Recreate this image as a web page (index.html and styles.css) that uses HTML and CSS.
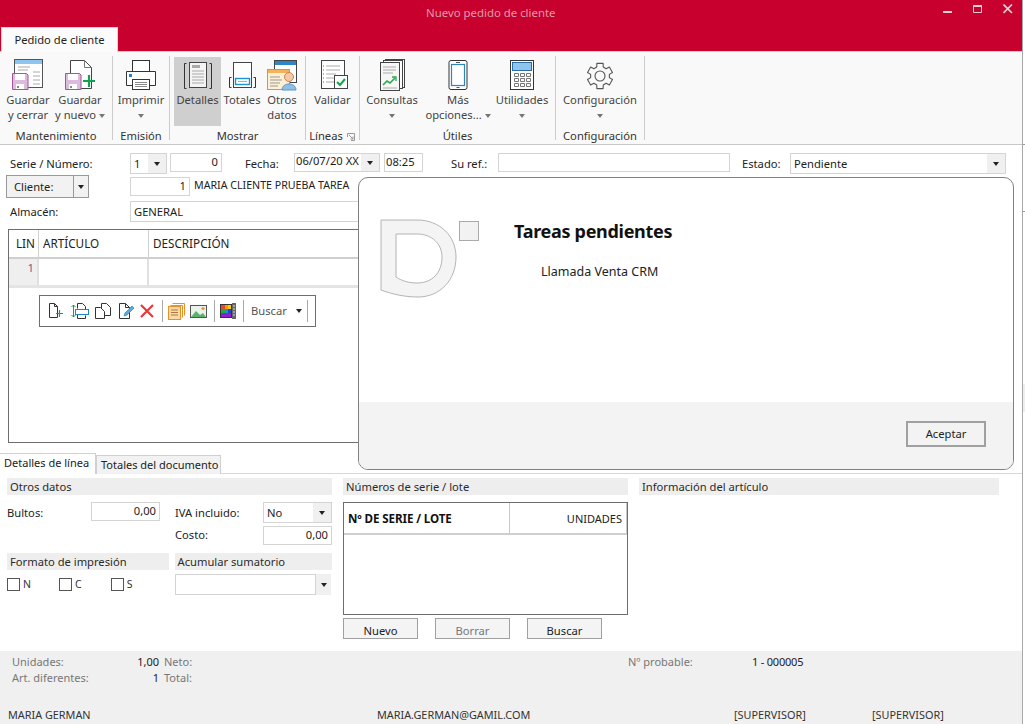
FILE: index.html
```html
<!DOCTYPE html>
<html lang="es">
<head>
<meta charset="utf-8">
<title>Nuevo pedido de cliente</title>
<link rel="stylesheet" href="styles.css">
</head>
<body>
<div class="screen">
<div class="app">
  <header class="titlebar">
    <div class="title-row">
      <span class="title">Nuevo pedido de cliente</span>
      <div class="win-controls">
        <svg width="10" height="10" viewBox="0 0 10 10"><rect x="0" y="7" width="9" height="2" fill="#e8d0d6"/></svg>
        <svg width="10" height="10" viewBox="0 0 10 10"><path d="M.5 2.5h8v6h-8z" fill="none" stroke="#e8d0d6"/><rect y="1" width="9" height="2" fill="#e8d0d6"/></svg>
        <svg width="10" height="10" viewBox="0 0 10 10"><path d="M.5.5l8.500 8.500M9 .5L.5 9" fill="none" stroke="#e8d0d6" stroke-width="1.700"/></svg>
      </div>
    </div>
    <div class="tab-row"><div class="ribbon-tab">Pedido de cliente</div></div>
  </header>

  <nav class="ribbon">
    <section class="group g1">
      <div class="buttons">
        <div class="rbtn w50"><svg class="ri" width="34" height="34" viewBox="0 0 34 34">
          <rect x="3.500" y="1.500" width="28" height="28" fill="#fff" stroke="#555"/><rect x="4" y="2" width="27" height="4" fill="#8ec5ee"/>
          <path d="M7 9h12M7 12h10M22 14h7M22 18h7M22 22h7M22 26h7M7 9v0" stroke="#aaa" fill="none"/>
          <path d="M1.500 15.500h14l1.500 1.500v14.500h-15.500z" fill="#dcbcdc" stroke="#a5559d"/><rect x="4" y="16" width="10" height="6" fill="#fff"/><rect x="5" y="26" width="8" height="5" fill="#fff"/><rect x="6" y="28" width="2" height="2" fill="#888"/>
        </svg><span>Guardar<br>y cerrar</span></div>
        <div class="rbtn w54"><svg class="ri" width="34" height="34" viewBox="0 0 34 34">
          <path d="M7.500 2.500h14l7 7v21h-21z" fill="#fff" stroke="#444"/><path d="M21.500 2.500v7h7" fill="none" stroke="#777"/>
          <path d="M2.500 15.500h14l1.500 1.500v14.500h-15.500z" fill="#dcbcdc" stroke="#a5559d"/><rect x="5" y="16" width="10" height="6" fill="#fff"/><rect x="6" y="26" width="8" height="5" fill="#fff"/><rect x="7" y="28" width="2" height="2" fill="#888"/>
          <path d="M26 17v12M20 23h12" stroke="#12a150" stroke-width="2.200" fill="none"/>
        </svg><span>Guardar<br>y nuevo <i class="caret grey"></i></span></div>
      </div>
      <div class="group-label">Mantenimiento</div>
    </section>
    <section class="group g2">
      <div class="buttons">
        <div class="rbtn w56"><svg class="ri" width="34" height="34" viewBox="0 0 34 34">
          <rect x="8.500" y="2.500" width="17" height="11" fill="#fff" stroke="#333"/><path d="M2.500 13.500h29v14h-29z" fill="#fff" stroke="#333"/><rect x="5" y="16" width="3" height="3" fill="#1f80c8"/>
          <rect x="8.500" y="21.500" width="17" height="10" fill="#fff" stroke="#333"/><path d="M11 24.500h12M11 26.500h12M11 28.500h12" stroke="#888" fill="none"/>
        </svg><span>Imprimir<br><i class="caret grey"></i></span></div>
      </div>
      <div class="group-label">Emisión</div>
    </section>
    <section class="group g3">
      <div class="buttons">
        <div class="rbtn w47 active"><svg class="ri" width="34" height="34" viewBox="0 0 34 34">
          <path d="M5.500 5.500h-2v25h2M28.500 5.500h2v25h-2" fill="none" stroke="#333"/><rect x="8.500" y="3.500" width="17" height="25" fill="#f4f4f4" stroke="#444" transform="translate(0 1)"/>
          <rect x="11" y="7" width="8" height="3" fill="#aaa"/><path d="M11 13h12M11 16h12M11 19h12M11 22h12M11 25h12" stroke="#aaa" fill="none"/>
        </svg><span>Detalles</span></div>
        <div class="rbtn w42"><svg class="ri" width="34" height="34" viewBox="0 0 34 34">
          <rect x="8.500" y="3.500" width="18" height="25" fill="#fff" stroke="#444" transform="translate(0 1)"/><path d="M6.500 19.500h-2v10h2M28.500 19.500h2v10h-2" fill="none" stroke="#333"/>
          <rect x="10.500" y="20.500" width="14" height="6" fill="#fff" stroke="#1f93d0" stroke-width="1.400"/><path d="M13 23.500h9" stroke="#aaa"/>
        </svg><span>Totales</span></div>
        <div class="rbtn w38"><svg class="ri" width="34" height="34" viewBox="0 0 34 34">
          <rect x="9.500" y="2.500" width="22" height="22" fill="#fff" stroke="#444"/><rect x="10" y="3" width="21" height="4" fill="#2f86c5"/>
          <rect x="2.500" y="11.500" width="22" height="20" fill="#fdf0d4" stroke="#d9924a"/><rect x="3" y="12" width="21" height="3" fill="#f5b25a"/><path d="M5 19h10M5 22h12M5 25h10M5 28h8" stroke="#999"/>
          <circle cx="24" cy="19" r="4.500" fill="#f4c9a6" stroke="#c98552"/><path d="M17 32c0-8 14-8 14 0z" fill="#8fbfe4" stroke="#5a95c8"/>
        </svg><span>Otros<br>datos</span></div>
      </div>
      <div class="group-label">Mostrar</div>
    </section>
    <section class="group g4">
      <div class="buttons">
        <div class="rbtn w53"><svg class="ri" width="34" height="34" viewBox="0 0 34 34">
          <rect x="5.500" y="2.500" width="23" height="28" fill="#fff" stroke="#444"/><path d="M10 8h14M10 12h14M10 16h10M10 20h8M10 24h8" stroke="#aaa"/><path d="M7 8h1M7 12h1M7 16h1M7 20h1M7 24h1" stroke="#c33"/>
          <rect x="18.500" y="17.500" width="13" height="13" fill="#fff" stroke="#444"/><path d="M21 24l3 3 5-6" fill="none" stroke="#16a34a" stroke-width="2"/>
        </svg><span>Validar</span></div>
      </div>
      <div class="group-label with-launcher">Líneas<svg class="launcher" width="8" height="8" viewBox="0 0 8 8"><path d="M.5 4V.5H7.500V7.500H4M2 2l4 4M6 3.500V6H3.500" fill="none" stroke="#999"/></svg></div>
    </section>
    <section class="group g5">
      <div class="buttons">
        <div class="rbtn w64"><svg class="ri" width="34" height="34" viewBox="0 0 34 34">
          <rect x="10.500" y="1.500" width="19" height="28" fill="#fff" stroke="#444"/><rect x="8.500" y="2.500" width="19" height="28" fill="#fff" stroke="#444"/>
          <rect x="5.500" y="4.500" width="19" height="28" fill="#f6f6f6" stroke="#444"/><path d="M8 9h13M8 12h13M8 15h10" stroke="#aaa"/>
          <path d="M8 27l4-4 3 2 5-5" fill="none" stroke="#2da84f" stroke-width="1.600"/><path d="M17 19h4v4" fill="none" stroke="#2da84f" stroke-width="1.300"/><path d="M8 30h14" stroke="#aaa"/>
        </svg><span>Consultas<br><i class="caret grey"></i></span></div>
        <div class="rbtn w68"><svg class="ri" width="34" height="34" viewBox="0 0 34 34">
          <rect x="8" y="2.500" width="18" height="29" rx="2" fill="#fff" stroke="#333"/><rect x="10.500" y="6.500" width="13" height="21" fill="#fff" stroke="#2a86c4" stroke-width="1.200"/><path d="M15 4.500h4M15.500 29.500h3" stroke="#555"/>
        </svg><span>Más<br>opciones... <i class="caret grey"></i></span></div>
        <div class="rbtn w60"><svg class="ri" width="34" height="34" viewBox="0 0 34 34">
          <rect x="5.500" y="2.500" width="23" height="29" fill="#fff" stroke="#333"/><rect x="7.500" y="4.500" width="19" height="8" fill="#8ec5ee" stroke="#2a6ea5"/>
          <path d="M9.500 15.500h4v3h-4zM15.500 15.500h4v3h-4zM21.500 15.500h4v3h-4zM9.500 20.500h4v3h-4zM15.500 20.500h4v3h-4zM21.500 20.500h4v3h-4zM9.500 25.500h4v3h-4zM15.500 25.500h4v3h-4zM21.500 25.500h4v3h-4z" fill="#fff" stroke="#777"/>
        </svg><span>Utilidades<br><i class="caret grey"></i></span></div>
      </div>
      <div class="group-label">Útiles</div>
    </section>
    <section class="group g6">
      <div class="buttons">
        <div class="rbtn w88"><svg class="ri" width="34" height="34" viewBox="0 0 34 34">
          <g transform="translate(17 18)" fill="none" stroke="#555" stroke-width="1.100" stroke-linejoin="round">
            <path d="M-3.150-12.600L3.150-12.600 3.250-8.930 6.110-7.280 9.350-9.030 12.500-3.580 9.360-1.650 9.360 1.650 12.500 3.580 9.350 9.030 6.110 7.280 3.250 8.930 3.150 12.600-3.150 12.600-3.250 8.930-6.110 7.280-9.350 9.030-12.500 3.580-9.360 1.650-9.360-1.650-12.500-3.580-9.350-9.030-6.110-7.280-3.250-8.930Z"/>
            <circle r="5"/>
          </g>
        </svg><span>Configuración<br><i class="caret grey"></i></span></div>
      </div>
      <div class="group-label">Configuración</div>
    </section>
  </nav>

  <main class="content">
    <div class="form-top">
      <div class="row row1">
        <label class="lbl l-serie">Serie / Número:</label>
        <div class="field combo c-serie"><span class="val">1</span><b class="drop"><i class="caret"></i></b></div>
        <div class="field num c-num">0</div>
        <label class="lbl l-fecha">Fecha:</label>
        <div class="field combo c-date"><span class="val">06/07/20 XX</span><b class="drop"><i class="caret"></i></b></div>
        <div class="field c-time">08:25</div>
        <label class="lbl l-ref">Su ref.:</label>
        <div class="field c-ref"></div>
        <label class="lbl l-estado">Estado:</label>
        <div class="field combo c-estado"><span class="val">Pendiente</span><b class="drop"><i class="caret"></i></b></div>
      </div>
      <div class="row row2">
        <div class="cliente-btn"><span class="cliente-text">Cliente:</span><b class="cliente-drop"><i class="caret"></i></b></div>
        <div class="field num c-cli">1</div>
        <span class="cli-name">MARIA CLIENTE PRUEBA TAREA</span>
      </div>
      <div class="row row3">
        <label class="lbl l-serie">Almacén:</label>
        <div class="field c-alm">GENERAL</div>
      </div>
    </div>

    <div class="lines">
      <div class="lines-head"><div>LIN</div><div>ARTÍCULO</div><div>DESCRIPCIÓN</div></div>
      <div class="lines-row"><div class="lin-no">1</div><div></div><div></div></div>
      <div class="float-bar">
        <svg width="18" height="18" viewBox="0 0 18 18"><path d="M1.500 1.500h5l3 3v11h-8zM6.500 1.500v3h3" fill="#fff" stroke="#333"/><path d="M8 11.500h7M11.500 8v7" stroke="#12a150" stroke-width="1.200"/></svg>
        <svg width="18" height="18" viewBox="0 0 18 18"><path d="M6.500 1.500h5l3 3v3M6.500 1.500v5M6.500 11.500v5h8v-3" fill="#fff" stroke="#333"/><rect x="4.500" y="7.500" width="13" height="5" fill="#fff" stroke="#1f86c8"/><path d="M2.500 3v12M.5 5l2-2 2 2M.5 13l2 2 2-2" fill="none" stroke="#12a150"/></svg>
        <svg width="18" height="18" viewBox="0 0 18 18"><path d="M7.500 1.500h5l4 4v8h-9z" fill="#fff" stroke="#333"/><path d="M1.500 5.500h5l4 4v7h-9z" fill="#fff" stroke="#333"/></svg>
        <svg width="18" height="18" viewBox="0 0 18 18"><path d="M2.500 1.500h6l4 4v11h-10zM8.500 1.500v4h4" fill="#fff" stroke="#333"/><path d="M7 14l1-3 7-7 2 2-7 7z" fill="#5da8df" stroke="#2a86c4" stroke-width=".7"/></svg>
        <svg width="18" height="18" viewBox="0 0 18 18"><path d="M1 3l12 12M13 3L1 15" stroke="#e8393a" stroke-width="2.200" fill="none"/></svg>
        <i class="bar-sep s1"></i>
        <svg width="18" height="18" viewBox="0 0 18 18"><path d="M5.500 1.500h12v12M3.500 3.500h12v12" fill="none" stroke="#e8912b"/><rect x="1.500" y="4.500" width="12" height="13" fill="#fbd9a8" stroke="#e8912b"/><path d="M4 8h7M4 10.500h7M4 13h7" stroke="#a87a3e"/></svg>
        <svg class="gap-img" width="18" height="18" viewBox="0 0 18 18"><rect x=".5" y="3.500" width="16" height="12" fill="#eaf3ea" stroke="#555"/><path d="M1 15l5-6 4 4 3-2 3 4z" fill="#5bb36b"/><circle cx="13" cy="6.500" r="1.600" fill="#f09040"/></svg>
        <i class="bar-sep s2"></i>
        <svg width="18" height="18" viewBox="0 0 18 18"><rect x="1" y="2" width="12" height="14" fill="#333"/><rect x="2" y="3" width="4" height="4" fill="#e43"/><rect x="6" y="3" width="3" height="4" fill="#f90"/><rect x="9" y="3" width="3" height="4" fill="#fc0"/><rect x="2" y="7" width="4" height="4" fill="#2a4"/><rect x="6" y="7" width="3" height="4" fill="#19c"/><rect x="9" y="7" width="3" height="4" fill="#24c"/><rect x="2" y="11" width="10" height="4" fill="#82c"/><rect x="13" y="1" width="4" height="16" fill="#666"/><path d="M14 4h2M14 7h2M14 10h2M14 13h2" stroke="#ddd"/></svg>
        <i class="bar-sep s3"></i>
        <span class="bar-search">Buscar</span><i class="caret bar-caret"></i>
        <i class="bar-sep s4"></i>
      </div>
    </div>

    <div class="tabs">
      <div class="tab on">Detalles de línea</div>
      <div class="tab">Totales del documento</div>
    </div>

    <div class="panels">
      <div class="col-left">
        <h3 class="sec-head">Otros datos</h3>
        <div class="p-row p-bultos">
          <label class="lb-bultos">Bultos:</label><div class="field num i-bultos">0,00</div>
          <label class="lb-iva">IVA incluido:</label><div class="field combo i-iva"><span class="val">No</span><b class="drop"><i class="caret"></i></b></div>
        </div>
        <div class="p-row p-costo"><label class="lb-costo">Costo:</label><div class="field num i-iva">0,00</div></div>
        <div class="p-row p-heads"><h3 class="sec-head h-fmt">Formato de impresión</h3><h3 class="sec-head h-acu">Acumular sumatorio</h3></div>
        <div class="p-row p-checks">
          <div class="checks"><span class="chk"><i></i>N</span><span class="chk c2"><i></i>C</span><span class="chk c3"><i></i>S</span></div>
          <div class="acu"><div class="field acu-input"></div><b class="acu-drop"><i class="caret"></i></b></div>
        </div>
      </div>
      <div class="col-mid">
        <h3 class="sec-head">Números de serie / lote</h3>
        <div class="serie-table">
          <div class="serie-head"><div class="sh1">Nº DE SERIE / LOTE</div><div class="sh2">UNIDADES</div></div>
        </div>
        <div class="serie-btns"><button>Nuevo</button><button class="dim">Borrar</button><button>Buscar</button></div>
      </div>
      <div class="col-right"><h3 class="sec-head">Información del artículo</h3></div>
    </div>

    <div class="modal">
      <div class="modal-body">
        <svg class="logo" width="100" height="80" viewBox="0 0 100 80">
          <path fill-rule="evenodd" d="M1 1H37C60 1 76 17 76 38C76 61 60 78 38 78C24 78 12 75 1 71ZM16 15V58C22 62 29 64 37 64C52 64 62 54 62 38C62 25 52 15 37 15Z" fill="#f4f4f4" stroke="#b4b4b4"/>
          <rect x="79.500" y="2.500" width="19" height="19" fill="#f2f2f2" stroke="#aaa"/>
        </svg>
        <div class="modal-text">
          <h2>Tareas pendientes</h2>
          <p>Llamada Venta CRM</p>
        </div>
      </div>
      <div class="modal-foot"><button class="accept">Aceptar</button></div>
    </div>
  </main>

  <footer class="footer">
    <div class="totals">
      <span class="t-l">Unidades:</span><span class="t-v">1,00</span><span class="t-l">Neto:</span><span class="t-l">Nº probable:</span><span class="t-n">1 - 000005</span>
      <span class="t-l">Art. diferentes:</span><span class="t-v">1</span><span class="t-l">Total:</span>
    </div>
    <div class="status"><span class="st1">MARIA GERMAN</span><span class="st2">MARIA.GERMAN@GAMIL.COM</span><span class="st3">[SUPERVISOR]</span><span>[SUPERVISOR]</span></div>
  </footer>
</div>
<aside class="side"><i class="tick t1"></i><i class="tick t2"></i><i class="thumb"></i></aside>
</div>
</body>
</html>
```
FILE: styles.css
```css
* { box-sizing: border-box; }
html, body { margin: 0; height: 100%; overflow: hidden; background: #fff; }
body { font: 11.2px/15px "Noto Sans", "Open Sans", sans-serif; color: #222; }
h2, h3, p { margin: 0; font-weight: normal; }
i, b { font-style: normal; font-weight: normal; }

.screen { display: flex; width: 1025px; height: 724px; }
.app { width: 1023px; height: 724px; display: flex; flex-direction: column; border-right: 1px solid #a8a8a8; }
.side { flex: 1; position: relative; }
.tick { position: absolute; left: 0; right: 0; height: 1px; background: #999; }
.t1 { top: 144px; }
.t2 { top: 211px; }
.thumb { position: absolute; left: 0; right: 0; top: 384px; height: 28px; background: #eee; }

/* title bar */
.titlebar { background: #c8002d; height: 51px; flex: none; }
.title-row { height: 27px; display: flex; align-items: flex-start; }
.title { margin: 5px 0 0 426px; color: #e29aab; font-size: 11.4px; line-height: 16px; }
.win-controls { margin-left: auto; margin-right: 9px; padding-top: 4px; display: flex; gap: 20px; }
.tab-row { height: 24px; padding-left: 1px; }
.ribbon-tab { width: 117px; height: 25px; background: #fbfbfb; border: 1px solid #d6d6d6; border-bottom: 0; text-align: center; line-height: 23px; color: #222; position: relative; z-index: 1; }

/* ribbon */
.ribbon { height: 94px; flex: none; display: flex; background: #f9f9f9; border-top: 1px solid #cfcfcf; border-bottom: 1px solid #c8c8c8; padding-top: 4px; color: #444; }
.group { height: 84px; border-right: 1px solid #ccc; }
.g1 { width: 113px; }
.g2 { width: 57px; }
.g3 { width: 136px; }
.g4 { width: 54px; }
.g5 { width: 196px; }
.g6 { width: 89px; }
.buttons { display: flex; height: 69px; margin-top: 1px; }
.g1 .buttons { padding-left: 3px; }
.g3 .buttons { padding-left: 4px; }
.rbtn { display: flex; flex-direction: column; align-items: center; text-align: center; height: 69px; white-space: nowrap; }
.ri { flex: none; display: block; margin-top: 1px; height: 34px; }
.rbtn span { display: block; }
.rbtn.active { background: #cfcfcf; }
.w38 { width: 38px; } .w42 { width: 42px; } .w47 { width: 47px; } .w50 { width: 50px; } .w53 { width: 53px; }
.w54 { width: 54px; } .w56 { width: 56px; } .w60 { width: 60px; } .w64 { width: 64px; } .w68 { width: 68px; } .w88 { width: 88px; }
.group-label { text-align: center; margin-top: 2px; color: #333; }
.with-launcher { position: relative; padding-right: 13px; }
.launcher { position: absolute; right: 4px; top: 5px; }

.caret { display: inline-block; width: 0; height: 0; border: 3px solid transparent; border-top: 4px solid #222; border-bottom: 0; vertical-align: middle; }
.caret.grey { border-top-color: #777; }

/* form */
.content { position: relative; flex: 1; min-height: 0; display: flex; flex-direction: column; }
.form-top { padding-top: 8px; }
.row { display: flex; align-items: flex-start; }
.row1 { height: 22px; padding-left: 10px; }
.row2 { height: 26px; padding-left: 6px; }
.row3 { height: 28px; padding-left: 10px; }
.lbl { line-height: 21px; color: #222; flex: none; }
.l-serie { width: 120px; }
.l-fecha { width: 49px; margin-left: 23px; }
.l-ref { width: 47px; margin-left: 28px; }
.l-estado { width: 48px; margin-left: 12px; }

.field { height: 19px; border: 1px solid #d4d4d4; background: #fff; padding: 0 3px; line-height: 16px; flex: none; white-space: nowrap; overflow: hidden; color: #1c1c1c; }
.field.num { text-align: right; }
.combo { display: flex; padding: 0; height: 21px; }
.combo .val { flex: 1; padding-left: 3px; overflow: hidden; line-height: 19px; }
.drop { flex: none; width: 18px; background: #f0f0f0; display: flex; align-items: center; justify-content: center; }
.c-serie { width: 37px; }
.c-num { width: 52px; margin-left: 3px; }
.c-date { width: 86px; height: 19px; }
.c-date .val { line-height: 14px; padding-left: 1px; }
.c-time { width: 39px; margin-left: 4px; padding-left: 1px; line-height: 15px; }
.c-ref { width: 232px; }
.c-estado { width: 216px; }
.c-estado .val { padding-left: 3px; }

.cliente-btn { display: flex; width: 83px; height: 23px; border: 1px solid #999; background: #f2f2f2; }
.cliente-text { width: 67px; padding-left: 7px; line-height: 21px; border-right: 1px solid #999; }
.cliente-drop { flex: 1; display: flex; align-items: center; justify-content: center; }
.c-cli { width: 60px; margin: 2px 0 0 41px; }
.cli-name { margin: 2px 0 0 4px; line-height: 17px; white-space: nowrap; font-size: 10.65px; }
.c-alm { width: 876px; height: 21px; line-height: 19px; }

/* lines grid */
.lines { position: relative; height: 214px; margin: 0 18px 0 8px; border: 1px solid #6e6e6e; flex: none; }
.lines-head, .lines-row { display: grid; grid-template-columns: 30px 110px 1fr; }
.lines-head { height: 29px; border-bottom: 2px solid #cfcfcf; font-size: 11.7px; line-height: 26px; }
.lines-head div { padding-left: 4px; border-right: 1px solid #d0d0d0; }
.lines-head div:first-child { padding-left: 7px; padding-right: 0; }
.lines-row { height: 29px; border-bottom: 3px solid #e4e4e4; }
.lines-row div { border-right: 2px solid #e0e0e0; }
.lin-no { background: #efefef; text-align: right; padding-right: 3px; color: #7a5a88; line-height: 17px; }

.float-bar { position: absolute; left: 30px; top: 65px; width: 277px; height: 32px; background: #fff; border: 1px solid #6e6e6e; display: flex; align-items: center; gap: 5px; padding-left: 8px; }
.bar-sep { flex: none; width: 1px; height: 22px; background: #a8a8a8; }
.s1 { margin-left: -1px; }
.s1, .s2, .s3 { margin-right: -1px; }
.s2 { margin-left: 1px; }
.s3 { margin-left: 1px; }
.bar-search { margin: 0 0 2px 3px; width: 37px; color: #555; line-height: 13px; }
.bar-caret { margin-left: 3px; }
.s4 { margin-left: 0; }

/* tabs */
.tabs { display: flex; align-items: flex-end; height: 21px; margin-top: 10px; border-bottom: 1px solid #d8d8d8; flex: none; }
.tab { height: 19px; padding: 0 4px; background: #f2f2f2; border: 1px solid #d0d0d0; border-bottom: 0; line-height: 18px; margin-bottom: -1px; font-size: 11px; width: 125px; white-space: nowrap; }
.tab.on { height: 21px; width: 96px; background: #fff; border-left: 0; border-right: 1px solid #d0d0d0; line-height: 17px; padding-left: 4px; margin-bottom: -1px; position: relative; }

/* lower panels */
.panels { display: flex; padding: 4px 0 0 7px; gap: 11px; flex: 1; min-height: 0; }
.sec-head { height: 17px; background: #eeeeee; padding-left: 3px; line-height: 17px; font-size: 11.2px; color: #2a2a2a; }
.col-left { width: 325px; }
.col-mid { width: 285px; }
.col-right { width: 360px; }
.p-row { display: flex; align-items: flex-start; }
.p-bultos { margin-top: 7px; height: 24px; }
.p-bultos label { line-height: 21px; }
.p-costo label { line-height: 17px; }
.lb-bultos { width: 84px; }
.i-bultos { width: 69px; }
.lb-iva { width: 88px; margin-left: 15px; }
.i-iva { width: 69px; }
.field.i-iva.num { height: 19px; }
.p-costo { height: 27px; }
.lb-costo { width: 88px; margin-left: 168px; }
.p-heads { gap: 6px; }
.h-fmt { width: 162px; }
.h-acu { width: 158px; }
.p-checks { margin-top: 4px; }
.checks { display: flex; width: 168px; padding-top: 4px; }
.chk { display: flex; align-items: center; gap: 3px; height: 13px; font-size: 10.5px; color: #333; }
.chk i { width: 13px; height: 13px; border: 1px solid #555; background: #fff; }
.c2 { margin-left: 28px; }
.c3 { margin-left: 29px; }
.acu { display: flex; }
.acu-input { width: 141px; height: 21px; }
.acu-drop { width: 15px; height: 21px; background: #f0f0f0; display: flex; align-items: center; justify-content: center; }

.serie-table { margin-top: 7px; height: 113px; border: 1px solid #6e6e6e; }
.serie-head { display: flex; height: 32px; border-bottom: 2px solid #cfcfcf; line-height: 32px; }
.sh1 { width: 166px; padding-left: 4px; font-weight: bold; border-right: 1px solid #c8c8c8; color: #111; font-size: 11.6px; white-space: nowrap; letter-spacing: -.1px; }
.sh2 { flex: 1; text-align: right; padding-right: 4px; border-right: 1px solid #c8c8c8; font-size: 11px; }
.serie-btns { display: flex; gap: 17px; margin-top: 3px; }
button { font: inherit; color: #222; padding: 0; }
.serie-btns button { width: 75px; height: 21px; background: #f4f4f4; border: 1px solid #a0a0a0; line-height: 19px; padding-top: 2px; }
.serie-btns .dim { color: #777; }

/* modal */
.modal { position: absolute; left: 358px; top: 32px; width: 656px; height: 293px; border: 1px solid #808080; border-radius: 10px; overflow: hidden; background: #fff; display: flex; flex-direction: column; }
.modal-body { flex: 1; display: flex; align-items: flex-start; padding: 41px 0 0 21px; }
.logo { flex: none; }
.modal-text { margin-left: 34px; }
.modal-text h2 { font-size: 18px; line-height: 24px; font-weight: bold; color: #111; letter-spacing: -.3px; white-space: nowrap; }
.modal-text p { margin: 21px 0 0 27px; line-height: 16px; font-size: 12.5px; color: #222; }
.modal-foot { height: 67px; flex: none; background: #f3f3f3; padding: 19px 0 0 547px; }
.accept { width: 80px; height: 26px; border: 2px solid #a0a0a0; background: #f3f3f3; line-height: 20px; }

/* footer */
.footer { height: 73px; flex: none; background: #f0f0f0; padding-top: 3px; }
.totals { display: grid; grid-template-columns: 100px 47px 469px 124px auto; column-gap: 0; grid-auto-rows: 16px; padding-left: 12px; line-height: 16px; font-size: 11px; }
.t-l { color: #777; }
.t-v { text-align: right; color: #222; }
.totals .t-v + .t-l { padding-left: 5px; }
.t-n { color: #222; letter-spacing: -.2px; }
.status { display: flex; margin-top: 21px; padding-left: 8px; color: #333; line-height: 16px; font-size: 10.85px; }
.st1 { width: 369px; }
.st2 { width: 357px; }
.st3 { width: 138px; }
```
